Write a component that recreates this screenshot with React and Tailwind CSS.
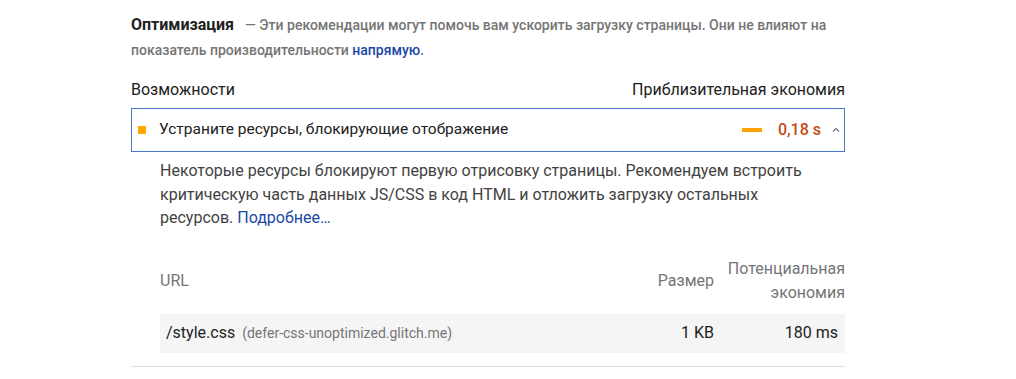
import React from "react";

const font = { fontFamily: "Roboto, 'Noto Sans', sans-serif" };

const ChevronUp = () => (
  <svg width="10" height="10" viewBox="0 0 10 10" className="text-gray-500">
    <path d="M2 6.5 L5 3.5 L8 6.5" fill="none" stroke="currentColor" strokeWidth="1.2" />
  </svg>
);

const App = () => {
  return (
    <div className="w-[1016px] h-[379px] bg-white text-[#212121] overflow-hidden" style={font}>
      <div className="ml-[131px] w-[714px] pt-[12px]">
        {/* section header */}
        <div className="text-[14px] leading-[25px] font-medium text-[#757575]">
          <span className="text-[16px] font-bold text-[#212121] mr-[11px]">Оптимизация</span>
          — Эти рекомендации могут помочь вам ускорить загрузку страницы. Они не влияют на
          показатель производительности <span className="text-[#1a47a5]">напрямую</span>.
        </div>

        {/* column headings */}
        <div className="flex justify-between mt-[16px] text-[16px] leading-[22px] text-[#212121]">
          <span>Возможности</span>
          <span>Приблизительная экономия</span>
        </div>

        {/* audit */}
        <div className="mt-[7px] border border-[#4a76c9] h-[44px] flex items-center pl-[6px] pr-[3px]">
          <span className="w-[8px] h-[8px] bg-[#ffa400]" />
          <span className="ml-[13px] text-[15.5px] text-[#212121]">
            Устраните ресурсы, блокирующие отображение
          </span>
          <span className="ml-auto w-[20px] h-[4px] bg-[#ffa400]" />
          <span className="ml-[16px] text-[16px] font-medium text-[#c64b16]">0,18 s</span>
          <span className="ml-[10px] flex items-center"><ChevronUp /></span>
        </div>

        <div className="pl-[29px] pt-[7px]">
          <p className="max-w-[650px] text-[16px] leading-[23.5px] text-[#424242]">
            Некоторые ресурсы блокируют первую отрисовку страницы. Рекомендуем встроить
            критическую часть данных JS/CSS в код HTML и отложить загрузку остальных
            ресурсов. <span className="text-[#1a47a5]">Подробнее…</span>
          </p>

          <table className="mt-[27px] w-full text-[16px] text-[#212121] border-separate border-spacing-0">
            <thead>
              <tr className="text-[#757575]">
                <th className="text-left font-normal align-middle pb-[9px]">URL</th>
                <th className="text-right font-normal align-middle w-[110px] pr-[1px] pb-[9px]">Размер</th>
                <th className="text-right font-normal leading-[24px] w-[130px] pb-[9px]">
                  Потенциальная<br />экономия
                </th>
              </tr>
            </thead>
            <tbody>
              <tr className="bg-[#f5f5f5] h-[39px]">
                <td className="pl-[6px]">
                  /style.css
                  <span className="ml-[7px] text-[14px] text-[#757575]">(defer-css-unoptimized.glitch.me)</span>
                </td>
                <td className="text-right pr-[1px]">1 KB</td>
                <td className="text-right pr-[7px]">180 ms</td>
              </tr>
            </tbody>
          </table>
        </div>
        <div className="mt-[13px] border-t border-[#e0e0e0]" />
      </div>
    </div>
  );
};

export default App;
